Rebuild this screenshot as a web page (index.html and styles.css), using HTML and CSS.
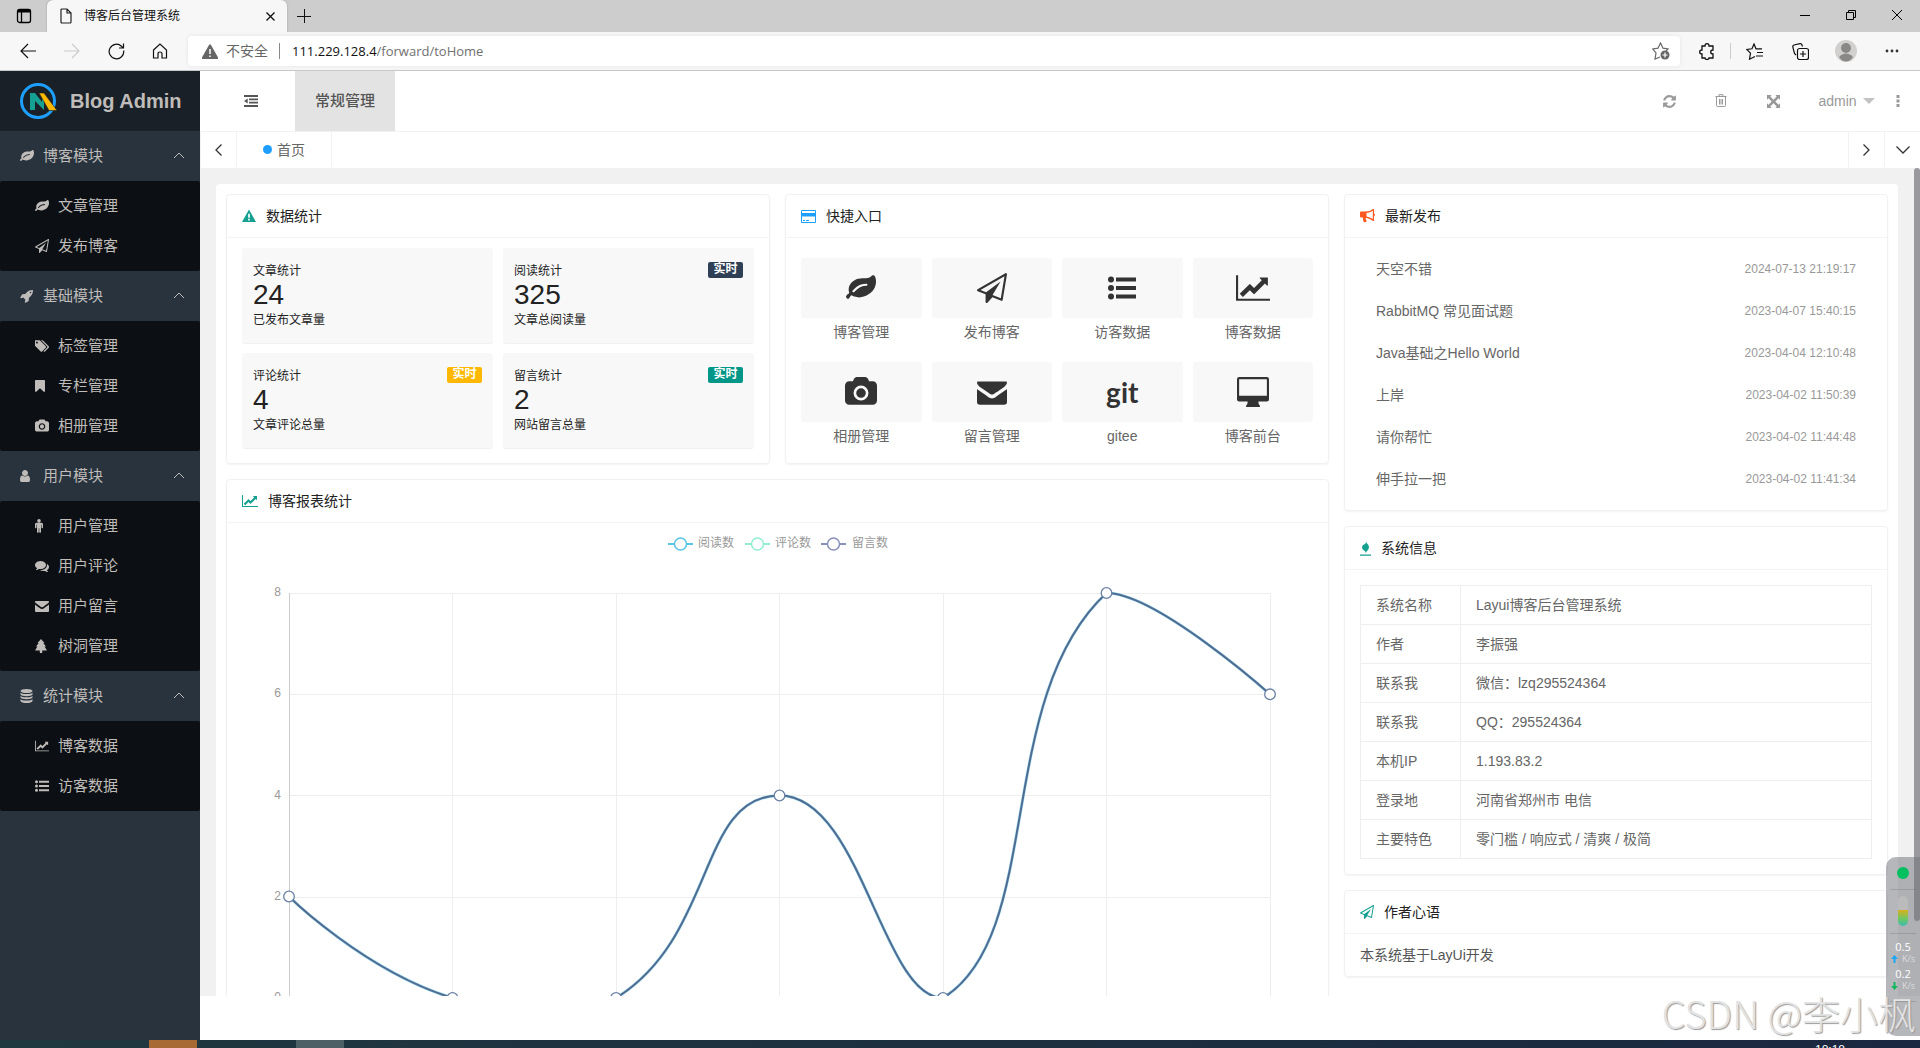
FILE: index.html
```html
<!DOCTYPE html>
<html lang="zh-CN">
<head>
<meta charset="utf-8">
<title>博客后台管理系统</title>
<link rel="stylesheet" href="styles.css">
</head>
<body>
<svg class="sprite" aria-hidden="true">
  <symbol id="leaf" viewBox="0 0 1792 1792"><path d="M1280 704q0-26-19-45t-45-19q-172 0-318 49.500t-259.500 134-235.500 219.500q-19 21-19 45 0 26 19 45t45 19q24 0 45-19 27-24 74-71t67-66q137-124 268.500-176t313.500-52q26 0 45-19t19-45zm512-198q0 95-20 193-46 224-184.500 383t-357.500 268q-214 108-438 108-148 0-286-47-15-5-88-42t-96-37q-16 0-39.500 32t-45 70-52.500 70-60 32q-43 0-63.500-17.500t-45.500-59.500q-2-4-6-11t-5.500-10-3-9.500-1.500-13.500q0-35 31-73.500t68-65.500 68-56 31-48q0-4-14-38t-16-44q-9-51-9-104 0-115 43.500-220t119-184.500 170.500-139 204-95.500q55-18 145-25.500t179.500-9 178.500-6 163.500-24 113.500-56.500l29.500-29.500 29.500-28 27-20 36.500-16 43.500-4.500q39 0 70.500 46t47.500 112 24 124 8 96z"/></symbol>
  <symbol id="plane" viewBox="0 0 1792 1792"><path d="M1764 11q33 24 27 64l-256 1536q-5 29-32 45-14 8-31 8-11 0-24-5l-527-215-298 327q-18 21-47 21-14 0-23-4-19-7-30-23.500t-11-36.500v-452l-472-193q-37-14-40-55-3-39 32-59l1664-960q35-21 68 2zm-342 1499l221-1323-1434 827 336 137 863-639-478 797z"/></symbol>
  <symbol id="rocket" viewBox="0 0 1792 1792"><path d="M1440 448q0-40-28-68t-68-28-68 28-28 68 28 68 68 28 68-28 28-68zm224-288q0 249-75.500 430.500t-253.500 360.500q-81 80-195 176l-20 379q-2 16-16 26l-384 224q-7 4-16 4-12 0-23-9l-64-64q-13-14-8-32l85-276-281-281-276 85q-3 1-9 1-14 0-23-9l-64-64q-17-19-5-39l224-384q10-14 26-16l379-20q96-114 176-195 188-187 358-258t431-71q14 0 24 9.500t10 22.500z"/></symbol>
  <symbol id="tags" viewBox="0 0 1836 1792"><path d="M384 448q0-53-37.500-90.500t-90.500-37.500-90.500 37.500-37.500 90.500 37.500 90.500 90.500 37.500 90.500-37.500 37.500-90.500zm1067 576q0 53-37 90l-491 492q-39 37-91 37-53 0-90-37l-715-716q-38-37-64.500-101t-26.500-117v-416q0-52 38-90t90-38h416q53 0 117 26.500t102 64.500l715 714q37 39 37 91zm384 0q0 53-37 90l-491 492q-39 37-91 37-36 0-59-14t-53-45l470-470q37-37 37-90 0-52-37-91l-715-714q-38-38-102-64.500t-117-26.500h224q53 0 117 26.500t102 64.500l715 714q37 39 37 91z"/></symbol>
  <symbol id="bookmark" viewBox="256 0 1792 1792"><path d="M1420 128q23 0 44 9 33 13 52.500 41t19.500 62v1289q0 34-19.500 62t-52.500 41q-19 8-44 8-48 0-83-32l-441-424-441 424q-36 33-83 33-23 0-44-9-33-13-52.500-41t-19.500-62v-1289q0-34 19.500-62t52.500-41q21-9 44-9h1048z"/></symbol>
  <symbol id="camera" viewBox="-64 0 1920 1792"><path d="M896 672q119 0 203.500 84.500t84.500 203.500-84.500 203.500-203.500 84.500-203.500-84.500-84.500-203.500 84.500-203.500 203.500-84.500zm704-416q106 0 181 75t75 181v896q0 106-75 181t-181 75h-1408q-106 0-181-75t-75-181v-896q0-106 75-181t181-75h224l51-136q19-49 69.500-84.500t103.500-35.500h512q53 0 103.500 35.500t69.500 84.500l51 136h224zm-704 1152q185 0 316.500-131.500t131.500-316.500-131.500-316.500-316.500-131.500-316.500 131.500-131.500 316.500 131.500 316.500 316.500 131.500z"/></symbol>
  <symbol id="user" viewBox="256 0 1792 1792"><path d="M1536 1399q0 109-62.500 187t-150.500 78h-854q-88 0-150.500-78t-62.500-187q0-85 8.500-160.500t31.500-152 58.500-131 94-89 134.500-34.500q131 128 313 128t313-128q76 0 134.500 34.500t94 89 58.500 131 31.500 152 8.500 160.500zm-256-887q0 159-112.500 271.500t-271.500 112.500-271.500-112.500-112.500-271.500 112.500-271.500 271.500-112.500 271.500 112.500 112.500 271.500z"/></symbol>
  <symbol id="male" viewBox="384 0 1792 1792"><path d="M1408 672v416q0 40-28 68t-68 28-68-28-28-68v-352h-64v912q0 46-33 79t-79 33-79-33-33-79v-464h-64v464q0 46-33 79t-79 33-79-33-33-79v-912h-64v352q0 40-28 68t-68 28-68-28-28-68v-416q0-80 56-136t136-56h640q80 0 136 56t56 136zm-288-448q0 93-65.500 158.500t-158.500 65.500-158.500-65.500-65.500-158.500 65.500-158.500 158.500-65.500 158.500 65.500 65.500 158.500z"/></symbol>
  <symbol id="comments" viewBox="0 0 1792 1792"><path d="M1408 768q0 139-94 257t-256.500 186.500-353.500 68.500q-86 0-176-16-124 88-278 128-36 9-86 16h-3q-11 0-20.500-8t-11.500-21q-1-3-1-6.500t.5-6.500 2-6l2.500-5 3.500-5.500 4-5 4.500-5 4-4.500q5-6 23-25t26-29.500 22.500-29 25-38.500 20.500-44q-124-72-195-177t-71-224q0-139 94-257t256.500-186.500 353.500-68.500 353.500 68.500 256.500 186.500 94 257zm384 256q0 120-71 224.500t-195 176.500q10 24 20.500 44t25 38.500 22.500 29 26 29.500 23 25q1 1 4 4.500t4.500 5 4 5 3.500 5.500l2.500 5 2 6 .5 6.500-1 6.500q-3 14-13 22t-22 7q-50-7-86-16-154-40-278-128-90 16-176 16-271 0-472-132 58 4 88 4 161 0 309-45t264-129q125-92 192-212t67-254q0-77-23-152 129 71 204 178t75 230z"/></symbol>
  <symbol id="envelope" viewBox="0 0 1792 1792"><path d="M1792 710v794q0 66-47 113t-113 47h-1472q-66 0-113-47t-47-113v-794q44 49 101 87 362 246 497 345 57 42 92.500 65.500t94.500 48 110 24.500h2q51 0 110-24.500t94.500-48 92.500-65.500q170-123 498-345 57-39 100-87zm0-394q0 79-49 151t-122 123q-376 261-468 325-10 7-42.500 31t-54 38-52 32.500-57.500 27-50 9h-2q-23 0-50-9t-57.500-27-52-32.500-54-38-42.500-31q-91-64-262-182.500t-205-142.500q-62-42-117-115.500t-55-136.500v-10q0-60 60-60h1672q60 0 60 60z"/></symbol>
  <symbol id="tree" viewBox="0 0 14 14"><path d="M6 0 9.500 4H8.300l2.700 3.400H9.600L12 11.500H7.200V14H4.800V11.500H0L2.400 7.400H1L3.700 4H2.500z"/></symbol>
  <symbol id="database" viewBox="0 0 14 14"><ellipse cx="6.500" cy="2" rx="6" ry="2"/><path d="M.5 3.500q1 1.500 6 1.500t6-1.500V5.500q-1 1.700-6 1.700T.5 5.500zM.5 6.800q1 1.500 6 1.500t6-1.500V8.600q-1 1.700-6 1.700T.5 8.600zM.5 10q1 1.500 6 1.500t6-1.500v2q-1 2-6 2t-6-2z"/></symbol>
  <symbol id="chart" viewBox="0 0 2048 1792"><path d="M2048 1536v128h-2048v-1536h128v1408h1920zm-128-1248v435q0 21-19.500 29.500t-35.500-7.500l-121-121-633 633q-10 10-23 10t-23-10l-233-233-416 416-192-192 585-585q10-10 23-10t23 10l233 233 464-464-121-121q-16-16-7.500-35.500t29.500-19.500h435q14 0 23 9t9 23z"/></symbol>
  <symbol id="list" viewBox="0 0 28 28"><circle cx="3" cy="5.500" r="3"/><circle cx="3" cy="14" r="3"/><circle cx="3" cy="22.500" r="3"/><path d="M8 3.500h20v4H8zM8 12h20v4H8zM8 20.500h20v4H8z"/></symbol>
  <symbol id="desktop" viewBox="0 0 30 28"><path fill-rule="evenodd" d="M2 0h26q2 0 2 2v19q0 2-2 2h-8q0 3 1.500 4v1h-13v-1Q10 26 10 23H2q-2 0-2-2V2Q0 0 2 0zm0 2v15.500h26V2z"/></symbol>
  <symbol id="warn" viewBox="0 0 15 14"><path fill-rule="evenodd" d="M7.500 0 15 13.500H0zM6.600 4.500v4.300h1.800V4.500zm0 5.500v1.800h1.800V10z"/></symbol>
  <symbol id="card" viewBox="0 0 15 13"><path fill-rule="evenodd" d="M1 0h13q1 0 1 1v11q0 1-1 1H1q-1 0-1-1V1q0-1 1-1zm0 1v2h13V1zm0 5.500V12h13V6.500zM2 10h2v1H2zm3 0h3v1H5z"/></symbol>
  <symbol id="horn" viewBox="0 0 15 14"><path fill-rule="evenodd" d="M0 3.500q0-1 1-1h4.500Q10 2.500 13 0h1v4.500q1 .3 1 1.200t-1 1.200V12h-1Q10 9.500 6 8.800q-1 1 .7 3.200-.5 1.500-2.700 1.300Q2.500 11 3 8.500H1q-1 0-1-1zm6.500.5v3.500q4 .5 6.300 2.500V1.700Q10.500 3.700 6.500 4z"/></symbol>
  <symbol id="fire" viewBox="0 0 11 15"><path d="M6.500 0q-.5 2 1.500 3.500 2.200 3-.5 6L5.500 12Q6 10 4 9.500 .5 7 3 4 6.500 2.500 6.500 0zM0 13.500h11v1.300H0z"/></symbol>
  <symbol id="refresh" viewBox="0 0 1792 1792"><path d="M1639 1056q0 5-1 7-64 268-268 434.500t-478 166.500q-146 0-282.500-55t-243.500-157l-129 129q-19 19-45 19t-45-19-19-45v-448q0-26 19-45t45-19h448q26 0 45 19t19 45-19 45l-137 137q71 66 161 102t187 36q134 0 250-65t186-179q11-17 53-117 8-23 30-23h192q13 0 22.500 9.500t9.500 22.500zm25-800v448q0 26-19 45t-45 19h-448q-26 0-45-19t-19-45 19-45l138-138q-148-137-349-137-134 0-250 65t-186 179q-11 17-53 117-8 23-30 23h-199q-13 0-22.500-9.500t-9.500-22.500v-7q65-268 270-434.500t480-166.500q146 0 284 55.500t245 156.500l130-129q19-19 45-19t45 19 19 45z"/></symbol>
  <symbol id="trash" viewBox="0 0 12 14"><path fill="none" stroke="currentColor" d="M.5 2.500h11M4 2.500V.7h4v1.800M1.500 3v8.500q0 1 1 1h7q1 0 1-1V3M4.500 5v5.500M6 5v5.500M7.500 5v5.500"/></symbol>
  <symbol id="expand" viewBox="0 0 14 14"><path d="M0 0h5L3.600 1.600 7 5l3.400-3.400L9 0h5v5l-1.600-1.400L9 7l3.400 3.400L14 9v5H9l1.400-1.600L7 9l-3.400 3.400L5 14H0V9l1.600 1.400L5 7 1.600 3.600 0 5z"/></symbol>
  <symbol id="dots" viewBox="0 0 4 12"><path d="M.5 0h3v3h-3zM.5 4.500h3v3h-3zM.5 9h3v3h-3z"/></symbol>
  <symbol id="up" viewBox="0 0 12 7"><path fill="none" stroke="currentColor" d="M1 6 6 1l5 5"/></symbol>
  <symbol id="outdent" viewBox="0 0 14 12"><path d="M0 0h14v2H0zM5 3.400h9v1.900H5zM5 6.700h9v1.900H5zM0 10h14v2H0zM3.700 3.400v5.200L0 6z"/></symbol>
</svg>

<div class="window">
  <div class="tabstrip">
    <button class="cb tabmenu" aria-label="标签页操作"><svg width="16" height="16" viewBox="0 0 16 16" fill="none" stroke="#000" stroke-width="1.300"><rect x="1.500" y="1.500" width="13" height="13" rx="2"/><path d="M1.500 3h13" stroke-width="3"/><path d="M5.500 4v10.500"/></svg></button>
    <div class="browser-tab">
      <svg width="12" height="16" viewBox="0 0 12 16" fill="none" stroke="#222" stroke-width="1.200"><path d="M1 2q0-1 1-1h5l4 4v9q0 1-1 1H2q-1 0-1-1zM7 1v4h4"/></svg>
      <span class="tab-title">博客后台管理系统</span>
      <button class="cb" aria-label="关闭标签页"><svg width="9" height="9" viewBox="0 0 9 9" stroke="#111" stroke-width="1.300"><path d="M.5.5l8 8M8.500.5l-8 8"/></svg></button>
    </div>
    <button class="cb plus" aria-label="新建标签页"><svg width="14" height="14" viewBox="0 0 14 14" stroke="#111"><path d="M7.500 0v14M0 7.500h14"/></svg></button>
    <div class="winbtns">
      <button class="cb" aria-label="最小化"><svg width="10" height="10" viewBox="0 0 10 10" stroke="#000"><path d="M0 5.500h10"/></svg></button>
      <button class="cb" aria-label="还原"><svg width="10" height="10" viewBox="0 0 10 10" fill="none" stroke="#000"><path d="M.5 2.500h7v7h-7zM2.500 2.500v-2h7v7h-2"/></svg></button>
      <button class="cb" aria-label="关闭"><svg width="10" height="10" viewBox="0 0 10 10" stroke="#000"><path d="M0 0l10 10M10 0 0 10"/></svg></button>
    </div>
  </div>
  <div class="toolbar">
    <div class="navbtns">
      <button class="cb" aria-label="后退"><svg width="16" height="16" viewBox="0 0 16 16" fill="none" stroke="#111" stroke-width="1.200"><path d="M16 8H1M8 1 1 8l7 7"/></svg></button>
      <button class="cb" aria-label="前进"><svg width="16" height="16" viewBox="0 0 16 16" fill="none" stroke="#ccc" stroke-width="1.200"><path d="M0 8h15M8 1l7 7-7 7"/></svg></button>
      <button class="cb" aria-label="刷新"><svg width="17" height="17" viewBox="0 0 17 17" fill="none" stroke="#111" stroke-width="1.200"><path d="M15.700 7.500A7.300 7.300 0 1 1 13.500 3.200L15 5M15.500.5V5H11"/></svg></button>
      <button class="cb" aria-label="主页"><svg width="16" height="16" viewBox="0 0 16 16" fill="none" stroke="#111" stroke-width="1.200"><path d="M1.500 7 8 1l6.500 6v8H10v-4q0-2-2-2t-2 2v4H1.500z"/></svg></button>
    </div>
    <div class="address">
      <svg width="16" height="15" viewBox="0 0 16 15"><path fill="#666" d="M7 1q1-1.500 2 0l7 12.500q.3 1.500-1 1.500H1q-1.300 0-1-1.500z"/><path stroke="#fff" stroke-width="1.500" d="M8 5v5M8 11.500V13"/></svg>
      <span class="unsafe">不安全</span>
      <label class="url"><span class="host">111.229.128.4</span><input aria-label="地址" value="/forward/toHome"></label>
      <button class="cb" aria-label="收藏"><svg width="18" height="18" viewBox="0 0 18 18" fill="none" stroke="#666" stroke-width="1.200"><path d="M8 15l-5 2 1-6L.8 7l5.200-.8L8.500 1 11 6.200l5 .8-2 2"/><circle cx="13" cy="13" r="4.500" fill="#666" stroke="none"/><path stroke="#fff" d="M13 10.500v5M10.500 13h5"/></svg></button>
    </div>
    <div class="tools">
      <button class="cb" aria-label="扩展"><svg width="16" height="17" viewBox="0 0 16 17" fill="none" stroke="#111" stroke-width="1.300"><path d="M3 3h3q0-2.300 2-2.300T10 3h4v4q-2.300 0-2.300 2t2.300 2v4h-4q0 1.500-2 1.500T6 15H3v-4Q.7 11 .7 9T3 7z"/></svg></button>
      <span class="rule"></span>
      <button class="cb" aria-label="收藏夹"><svg width="17" height="17" viewBox="0 0 17 17" fill="none" stroke="#111" stroke-width="1.200"><path d="M9 13.500l-5.500 2.700 1-6L.8 6.500 6 5.800 8 1l2 4.800h6M11 9.500h6M10 13h7"/></svg></button>
      <button class="cb" aria-label="集锦"><svg width="17" height="17" viewBox="0 0 17 17" fill="none" stroke="#111" stroke-width="1.200"><rect x="5.500" y="5.500" width="11" height="11" rx="2"/><path d="M11 8v6M8 11h6M4 12 2.500 10.500.8 4Q.6 2.500 2 2L8 .7q1.500-.2 2 1.300l.5 1.500"/></svg></button>
      <button class="cb" aria-label="用户"><svg width="22" height="22" viewBox="0 0 22 22"><circle cx="11" cy="11" r="11" fill="#d2d0ce"/><circle cx="11" cy="8" r="5" fill="#8a8886"/><path fill="#8a8886" d="M4 17q3-3.500 7-3.500t7 3.500q-3 4.500-7 4.500T4 17z"/></svg></button>
      <button class="cb" aria-label="更多"><svg width="14" height="4" viewBox="0 0 14 4"><circle cx="2" cy="2" r="1.400"/><circle cx="7" cy="2" r="1.400"/><circle cx="12" cy="2" r="1.400"/></svg></button>
    </div>
  </div>

  <div class="app">
    <aside class="side">
      <div class="logo">
        <svg width="38" height="36" viewBox="0 0 38 36"><circle cx="18" cy="18" r="16.500" fill="none" stroke="#1e9fff" stroke-width="3"/><path fill="#16a092" d="M10 10l5 0 7 9v-8h2v16l-9-9v9h-5z"/><path fill="#ffb800" stroke="#192027" stroke-width=".6" d="M19 10l5 0 13 17.500h-8z"/></svg>
        <h1>Blog Admin</h1>
      </div>
      <nav>
        <a class="group" href="#"><svg class="ic"><use href="#leaf"/></svg><span>博客模块</span><svg class="arrow"><use href="#up"/></svg></a>
        <div class="sub">
          <a href="#"><svg class="ic"><use href="#leaf"/></svg>文章管理</a>
          <a href="#"><svg class="ic"><use href="#plane"/></svg>发布博客</a>
        </div>
        <a class="group" href="#"><svg class="ic"><use href="#rocket"/></svg><span>基础模块</span><svg class="arrow"><use href="#up"/></svg></a>
        <div class="sub">
          <a href="#"><svg class="ic"><use href="#tags"/></svg>标签管理</a>
          <a href="#"><svg class="ic"><use href="#bookmark"/></svg>专栏管理</a>
          <a href="#"><svg class="ic"><use href="#camera"/></svg>相册管理</a>
        </div>
        <a class="group" href="#"><svg class="ic"><use href="#user"/></svg><span>用户模块</span><svg class="arrow"><use href="#up"/></svg></a>
        <div class="sub">
          <a href="#"><svg class="ic"><use href="#male"/></svg>用户管理</a>
          <a href="#"><svg class="ic"><use href="#comments"/></svg>用户评论</a>
          <a href="#"><svg class="ic"><use href="#envelope"/></svg>用户留言</a>
          <a href="#"><svg class="ic"><use href="#tree"/></svg>树洞管理</a>
        </div>
        <a class="group" href="#"><svg class="ic"><use href="#database"/></svg><span>统计模块</span><svg class="arrow"><use href="#up"/></svg></a>
        <div class="sub">
          <a href="#"><svg class="ic"><use href="#chart"/></svg>博客数据</a>
          <a href="#"><svg class="ic"><use href="#list"/></svg>访客数据</a>
        </div>
      </nav>
    </aside>

    <div class="main">
      <header class="head">
        <button class="cb collapse" aria-label="收起菜单"><svg width="14" height="12"><use href="#outdent"/></svg></button>
        <a class="topnav" href="#">常规管理</a>
        <div class="actions">
          <button class="cb" aria-label="刷新页面"><svg width="15" height="15"><use href="#refresh"/></svg></button>
          <button class="cb" aria-label="清理缓存"><svg width="12" height="14"><use href="#trash"/></svg></button>
          <button class="cb" aria-label="全屏"><svg width="13" height="13"><use href="#expand"/></svg></button>
          <button class="cb account">admin<i class="caret"></i></button>
          <button class="cb" aria-label="更多设置"><svg width="4" height="12"><use href="#dots"/></svg></button>
        </div>
      </header>
      <div class="pagetabs">
        <button class="cb edge first" aria-label="向左"><svg width="7" height="12" viewBox="0 0 7 12" fill="none" stroke="#333" stroke-width="1.300"><path d="M6.500.5 1 6l5.500 5.500"/></svg></button>
        <a class="pagetab" href="#"><i class="dot"></i>首页</a>
        <button class="cb edge" aria-label="向右"><svg width="7" height="12" viewBox="0 0 7 12" fill="none" stroke="#333" stroke-width="1.300"><path d="M.5.5 6 6 .5 11.500"/></svg></button>
        <button class="cb edge" aria-label="标签操作"><svg width="14" height="8" viewBox="0 0 14 8" fill="none" stroke="#333" stroke-width="1.300"><path d="M.5.5 7 7 13.500.5"/></svg></button>
      </div>

      <div class="content">
        <main class="board">
          <div class="left">
            <section class="card">
              <h2><svg class="teal" width="14" height="14"><use href="#warn"/></svg>数据统计</h2>
              <div class="stats">
                <div class="stat"><p>文章统计</p><b>24</b><p>已发布文章量</p></div>
                <div class="stat"><p>阅读统计</p><b>325</b><p>文章总阅读量</p><span class="badge navy">实时</span></div>
                <div class="stat"><p>评论统计</p><b>4</b><p>文章评论总量</p><span class="badge amber">实时</span></div>
                <div class="stat"><p>留言统计</p><b>2</b><p>网站留言总量</p><span class="badge green">实时</span></div>
              </div>
            </section>
            <section class="card">
              <h2><svg class="blue" width="15" height="13"><use href="#card"/></svg>快捷入口</h2>
              <div class="quick">
                <a href="#"><span class="tile"><svg width="30" height="30"><use href="#leaf"/></svg></span>博客管理</a>
                <a href="#"><span class="tile"><svg width="30" height="30"><use href="#plane"/></svg></span>发布博客</a>
                <a href="#"><span class="tile"><svg width="30" height="28"><use href="#list"/></svg></span>访客数据</a>
                <a href="#"><span class="tile"><svg width="34" height="30"><use href="#chart"/></svg></span>博客数据</a>
                <a href="#"><span class="tile"><svg width="32" height="30"><use href="#camera"/></svg></span>相册管理</a>
                <a href="#"><span class="tile"><svg width="30" height="30"><use href="#envelope"/></svg></span>留言管理</a>
                <a href="#"><span class="tile git">git</span>gitee</a>
                <a href="#"><span class="tile"><svg width="32" height="30"><use href="#desktop"/></svg></span>博客前台</a>
              </div>
            </section>
            <section class="card wide">
              <h2><svg class="teal" width="16" height="14"><use href="#chart"/></svg>博客报表统计</h2>
              <svg class="plot" viewBox="0 0 1071 520" role="img" aria-label="博客报表统计">
                <g fill="#fff" stroke-width="2">
                  <g stroke="#59c4e6"><path d="M426 11h25"/><circle cx="438.500" cy="11" r="6" stroke-width="1.500"/></g>
                  <g stroke="#93edd4"><path d="M503 11h25"/><circle cx="515.500" cy="11" r="6" stroke-width="1.500"/></g>
                  <g stroke="#8a91b8"><path d="M579 11h25"/><circle cx="591.500" cy="11" r="6" stroke-width="1.500"/></g>
                </g>
                <g class="axis"><text x="456" y="14">阅读数</text><text x="533" y="14">评论数</text><text x="610" y="14">留言数</text></g>
                <path fill="none" stroke="#eee" d="M47 60.500h981M47 161.500h981M47 262.500h981M47 364.500h981M210.500 60v405M374.500 60v405M537.500 60v405M701.500 60v405M864.500 60v405M1028.500 60v405"/>
                <path fill="none" stroke="#ccc" d="M47.500 60v405M47 465.500h981"/>
                <g class="axis" text-anchor="end"><text x="39" y="63">8</text><text x="39" y="164">6</text><text x="39" y="266">4</text><text x="39" y="367">2</text><text x="39" y="468">0</text></g>
                <g fill="none">
                  <path stroke="#59c4e6" stroke-opacity=".6" stroke-width="3" d="M47 363.500C47 363.500 122 437.500 210.500 465C285.600 465 310.900 465 374 465C474.400 402.800 455.800 262.500 537.500 262.500C619.300 262.500 640 465 701 465C803.500 401.500 751 165.400 864.500 60C914.500 60 1028 161.300 1028 161.300"/>
                  <path stroke="#516b91" stroke-width="2" d="M47 363.500C47 363.500 122 437.500 210.500 465C285.600 465 310.900 465 374 465C474.400 402.800 455.800 262.500 537.500 262.500C619.300 262.500 640 465 701 465C803.500 401.500 751 165.400 864.500 60C914.500 60 1028 161.300 1028 161.300"/>
                </g>
                <g fill="#fff" stroke="#6a80a5" stroke-width="1.300"><circle cx="47" cy="363.500" r="5.300"/><circle cx="210.500" cy="465" r="5.300"/><circle cx="374" cy="465" r="5.300"/><circle cx="537.500" cy="262.500" r="5.300"/><circle cx="701" cy="465" r="5.300"/><circle cx="864.500" cy="60" r="5.300"/><circle cx="1028" cy="161.300" r="5.300"/></g>
              </svg>
            </section>
          </div>
          <div class="rightcol">
            <section class="card">
              <h2><svg class="red" width="15" height="14"><use href="#horn"/></svg>最新发布</h2>
              <ul class="posts">
                <li><a href="#">天空不错</a><time>2024-07-13 21:19:17</time></li>
                <li><a href="#">RabbitMQ 常见面试题</a><time>2023-04-07 15:40:15</time></li>
                <li><a href="#">Java基础之Hello World</a><time>2023-04-04 12:10:48</time></li>
                <li><a href="#">上岸</a><time>2023-04-02 11:50:39</time></li>
                <li><a href="#">请你帮忙</a><time>2023-04-02 11:44:48</time></li>
                <li><a href="#">伸手拉一把</a><time>2023-04-02 11:41:34</time></li>
              </ul>
            </section>
            <section class="card">
              <h2><svg class="teal" width="11" height="15"><use href="#fire"/></svg>系统信息</h2>
              <div class="info">
                <table>
                  <tr><th scope="row">系统名称</th><td>Layui博客后台管理系统</td></tr>
                  <tr><th scope="row">作者</th><td>李振强</td></tr>
                  <tr><th scope="row">联系我</th><td>微信：lzq295524364</td></tr>
                  <tr><th scope="row">联系我</th><td>QQ：295524364</td></tr>
                  <tr><th scope="row">本机IP</th><td>1.193.83.2</td></tr>
                  <tr><th scope="row">登录地</th><td>河南省郑州市 电信</td></tr>
                  <tr><th scope="row">主要特色</th><td>零门槛 / 响应式 / 清爽 / 极简</td></tr>
                </table>
              </div>
            </section>
            <section class="card">
              <h2><svg class="teal" width="14" height="14"><use href="#plane"/></svg>作者心语</h2>
              <p class="words">本系统基于LayUi开发</p>
            </section>
          </div>
        </main>
        <div class="scroll"></div>
      </div>
      <footer class="foot"></footer>
    </div>
  </div>
  <div class="taskbar"><i class="task orange"></i><i class="task grey"></i><span class="clock">18:18</span></div>

  <div class="monitor">
    <i class="led"></i><hr>
    <i class="gauge"></i><hr>
    <p>0.5</p><small><svg class="sky" width="7" height="8" viewBox="0 0 7 8"><path d="M3.500 0 7 4H4.500v4h-2V4H0z"/></svg>K/s</small>
    <p>0.2</p><small><svg class="lime" width="7" height="8" viewBox="0 0 7 8"><path d="M3.500 8 7 4H4.500V0h-2v4H0z"/></svg>K/s</small>
    <hr>
  </div>
  <div class="mark">CSDN @李小枫</div>
</div>
</body>
</html>
```
FILE: styles.css
```css
* { box-sizing: border-box; }
body, h1, h2, p, ul, hr { margin: 0; }
body {
  font: 14px/24px "Liberation Sans", "Noto Sans CJK SC", sans-serif;
  color: #333;
  background: #fff;
}
a { color: inherit; text-decoration: none; }
.sprite { position: absolute; width: 0; height: 0; }
svg { display: block; flex: none; fill: currentColor; }
svg[fill="none"] { fill: none; }
.cb {
  display: flex;
  align-items: center;
  justify-content: center;
  padding: 0;
  border: 0;
  background: none;
  color: inherit;
  font: inherit;
}
.window { position: relative; display: flex; flex-direction: column; height: 100vh; overflow: hidden; }

/* browser frame */
.tabstrip { display: flex; height: 32px; background: #cdcdcd; }
.tabmenu { width: 47px; }
.browser-tab {
  display: flex;
  align-items: center;
  gap: 12px;
  width: 240px;
  padding: 0 12px 0 13px;
  border-radius: 6px 6px 0 0;
  background: #f7f7f7;
  box-shadow: 0 0 2px #999;
  clip-path: inset(0 -3px 0 -3px);
  color: #111;
  font-size: 12px;
}
.tab-title { flex: 1; }
.plus { width: 34px; }
.winbtns { display: flex; margin-left: auto; }
.winbtns .cb { width: 46px; height: 29px; }
.toolbar {
  display: flex;
  align-items: center;
  height: 39px;
  border-bottom: 1px solid #c8c8c8;
  background: #f7f7f7;
  font-family: "Open Sans", "Noto Sans CJK SC", sans-serif;
  font-size: 13px;
}
.navbtns { display: flex; padding: 0 6px; }
.navbtns .cb { width: 44px; height: 30px; }
.address {
  display: flex;
  flex: 1;
  align-items: center;
  height: 30px;
  padding: 0 10px 0 14px;
  border-radius: 4px;
  background: #fff;
  box-shadow: 0 0 4px #e4e4e4;
}
.unsafe { margin: 0 11px 0 8px; color: #666; font-size: 14px; }
.url { display: flex; flex: 1; align-items: center; height: 16px; padding-left: 12px; border-left: 1px solid #888; }
.host { color: #111; }
.url input { flex: 1; padding: 0; border: 0; outline: 0; color: #707070; font: inherit; }
.tools { display: flex; align-items: center; padding: 0 5px 0 4px; }
.tools .cb { width: 46px; height: 30px; }
.rule { width: 1px; height: 16px; background: #ccc; }

/* sidebar */
.app { display: flex; flex: 1; min-height: 0; }
.side { width: 200px; background: #28333e; color: #bfbcb9; font-size: 15px; overflow: hidden; }
.logo { display: flex; align-items: center; gap: 12px; height: 60px; padding-left: 20px; background: #192027; }
.logo h1 { font-size: 20px; line-height: 24px; }
.group { display: flex; align-items: center; gap: 9px; height: 50px; padding: 0 15px 0 20px; }
.group span { flex: 1; }
.ic { width: 14px; height: 14px; overflow: visible; }
.arrow { width: 12px; height: 7px; margin-bottom: 2px; }
.sub { padding: 5px 0; background: #0c0f13; border-radius: 2px; }
.sub a { display: flex; align-items: center; gap: 9px; height: 40px; padding-left: 35px; }

/* header */
.main { display: flex; flex: 1; flex-direction: column; min-width: 0; }
.head { display: flex; align-items: center; height: 60px; color: #555; }
.collapse { width: 95px; padding-left: 7px; height: 60px; }
.topnav { width: 100px; background: #e3e3e3; line-height: 60px; text-align: center; font-size: 15px; font-weight: 500; }
.actions { display: flex; align-items: center; margin-left: auto; color: #999; }
.actions .cb { width: 52px; height: 60px; }
.actions .account { width: 93px; gap: 6px; padding-left: 2px; }
.actions .cb:last-child { width: 12px; margin-right: 16px; }
.caret { border: 6px solid transparent; border-top-color: #c2c2c2; border-bottom: 0; }
.pagetabs { display: flex; height: 37px; padding-bottom: 1px; border-top: 1px solid #f2f2f2; color: #666; }
.edge { width: 36px; border-left: 1px solid #f2f2f2; }
.first { width: 37px; border-right: 1px solid #f2f2f2; }
.pagetab { display: flex; align-items: center; gap: 5px; width: 95px; margin-right: auto; padding-left: 26px; border-right: 1px solid #f2f2f2; }
.dot { width: 9px; height: 9px; border-radius: 50%; background: #1e9fff; }

/* content */
.content { display: flex; flex: 1; min-height: 0; overflow: hidden; background: #f1f1f1; }
.board {
  display: grid;
  grid-template-columns: minmax(0, 1103fr) minmax(0, 544fr);
  gap: 15px;
  flex: 1;
  align-self: flex-start;
  margin: 16px 16px 0;
  padding: 10px;
  border-radius: 4px;
  background: #fff;
}
.scroll { width: 6px; height: 753px; border-radius: 3px; background: #9a9a9e; }
.foot { height: 44px; }
.left { display: grid; grid-template-columns: 1fr 1fr; gap: 15px; align-content: start; }
.rightcol { display: flex; flex-direction: column; gap: 15px; }
.card { border: 1px solid #f1f1f1; border-radius: 4px; box-shadow: 0 1px 2px #f3f3f3; }
.wide { grid-column: 1 / 3; }
.card h2 { display: flex; align-items: center; gap: 10px; height: 43px; padding: 0 15px; border-bottom: 1px solid #f4f4f4; font-size: 14px; font-weight: 400; color: #222; }
.teal { color: #16a092; }
.blue { color: #1e9fff; }
.red { color: #ff5722; }
.stats { display: grid; grid-template-columns: 1fr 1fr; gap: 9px 10px; padding: 10px 15px 14px; }
.stat { position: relative; height: 96px; padding: 14px 11px; border-bottom: 1px solid #f1f1f1; border-radius: 3px; background: #f8f8f8; color: #222; font-size: 12px; }
.stat p { line-height: 18px; }
.stat b { display: block; font-size: 28px; line-height: 30px; font-weight: 400; }
.stat b + p { line-height: 20px; }
.badge { position: absolute; top: 14px; right: 11px; width: 35px; height: 16px; border-radius: 2px; color: #fff; font-weight: 700; line-height: 15px; text-align: center; }
.navy { background: #2f4056; }
.amber { background: #ffb800; }
.green { background: #009688; }
.quick { display: grid; grid-template-columns: repeat(4, 1fr); gap: 16px 10px; padding: 20px 15px 13px; }
.quick a { color: #666; line-height: 28px; text-align: center; }
.tile { display: flex; align-items: center; justify-content: center; height: 60px; border-radius: 3px; background: #f8f8f8; color: #333; }
.git { font: 700 28px/56px Lato, sans-serif; }
.plot { width: auto; margin: 10px 15px; }
.axis { fill: #999; font-size: 12px; }
.posts { padding: 10px 31px; list-style: none; color: #666; line-height: 42px; }
.posts li { display: flex; justify-content: space-between; }
.posts time { color: #999; font-size: 12px; }
.info { padding: 15px; }
.info table { width: 100%; border-collapse: collapse; color: #666; line-height: 20px; }
.info th, .info td { padding: 9px 15px; border: 1px solid #eee; font-weight: 400; text-align: left; }
.info th { width: 100px; }
.words { padding: 10px 15px; color: #555; line-height: 22px; }

/* desktop edges */
.taskbar { display: flex; height: 8px; overflow: hidden; background: linear-gradient(90deg, #20383f, #1b2740); }
.task { width: 48px; }
.orange { margin-left: 149px; background: #a86a35; }
.grey { margin-left: 99px; background: #4d6066; }
.clock { margin: 3px 75px 0 auto; color: #fff; font-size: 12px; line-height: 14px; }
.monitor { position: absolute; right: 0; bottom: 12px; width: 34px; height: 179px; padding-top: 10px; border-radius: 10px 0 0 10px; background: rgba(115, 117, 125, .52); color: #fff; font: 11px/14px "Open Sans", sans-serif; text-align: center; }
.monitor hr { margin: 10px 4px 6px; border: 0; border-top: 1px solid rgba(90, 90, 95, .25); }
.monitor .gauge + hr { margin: 7px 4px 6px; }
.monitor small { display: flex; align-items: center; justify-content: center; gap: 4px; height: 10px; margin-bottom: 3px; font-size: 9px; line-height: 10px; color: #ddd; }
.sky { color: #1ea7f5; }
.lime { color: #12b85c; }
.led { display: block; width: 12px; height: 12px; margin: 0 auto; border-radius: 50%; background: #00c060; }
.gauge { display: block; width: 10px; height: 30px; margin: 0 auto; border-radius: 5px; background: linear-gradient(#bbb 46%, #d8b020 47%, #70c860 75%, #3cbcb0); }
.mark { position: absolute; right: 4px; bottom: 8px; color: #e3e3e3; font: 300 38px/54px "Noto Sans CJK SC", sans-serif; text-shadow: 1px 1px 1px #999; }
```
